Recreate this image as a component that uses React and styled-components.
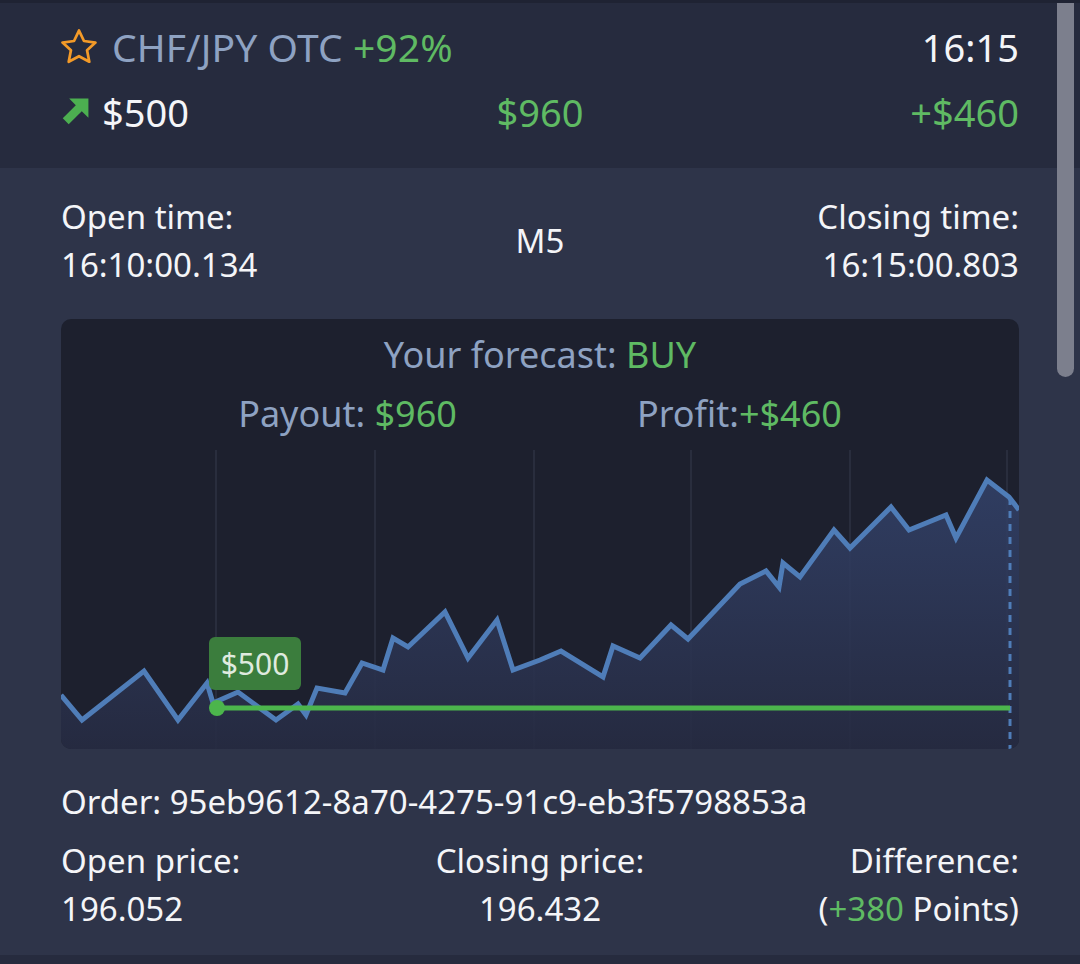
import React from "react";
import styled, { createGlobalStyle } from "styled-components";

const GlobalStyle = createGlobalStyle`
  html, body {
    margin: 0;
    padding: 0;
    background: #2e3449;
  }
  * { box-sizing: border-box; }
`;

const green = "#5fba63";
const slate = "#8ea2c2";

const Screen = styled.div`
  position: relative;
  width: 1080px;
  height: 964px;
  overflow: hidden;
  background: #2e3449;
  color: #f4f5f8;
  font-family: "Noto Sans", "Open Sans", sans-serif;
  border-top: 3px solid #1f2333;
`;

const Scrollbar = styled.div`
  position: absolute;
  top: 0;
  left: 1057px;
  width: 17px;
  height: 374px;
  border-radius: 0 0 9px 9px;
  background: #7c7f8d;
`;

const Header = styled.header`
  background: #262b3e;
  padding: 20px 61px 32px;
  display: flex;
  flex-direction: column;
  gap: 17px;
  font-size: 38px;
  line-height: 48px;
`;

const Row = styled.div`
  display: grid;
  grid-template-columns: 1fr auto 1fr;
  align-items: center;
  & > :last-child { justify-self: end; text-align: right; }
`;

const Cell = styled.div`
  display: flex;
  align-items: center;
  gap: ${(p) => p.gap || 0}px;
  white-space: pre;
  color: ${(p) => p.color || "inherit"};
`;

const Title = styled.span`
  font-size: 39px;
  letter-spacing: 0.1px;
`;

const Col = styled.div`
  display: flex;
  flex-direction: column;
  text-align: ${(p) => p.align || "left"};
  white-space: pre;
`;

const Span = styled.span`
  color: ${(p) => p.color};
`;

const Body = styled.main`
  padding: 25px 61px 0;
  font-size: 33px;
  line-height: 48px;
`;

const Card = styled.section`
  position: relative;
  margin-top: 30px;
  height: 430px;
  border-radius: 10px;
  background: #1d202e;
  overflow: hidden;
  padding-top: 12px;
  color: ${slate};
  font-size: 36px;
`;

const Forecast = styled.div`
  text-align: center;
`;

const Results = styled.div`
  display: flex;
  justify-content: center;
  gap: 180px;
  margin-top: 11px;
  white-space: pre;
`;

const ChartBox = styled.div`
  position: absolute;
  left: 0;
  bottom: 0;
  width: 958px;
  height: 299px;
`;

const Badge = styled.div`
  position: absolute;
  left: 148px;
  top: 187px;
  width: 92px;
  height: 53px;
  border-radius: 6px;
  background: #3b7d3d;
  color: #dfeadf;
  font-size: 30px;
  line-height: 53px;
  text-align: center;
`;

const OrderLine = styled.div`
  margin-top: 29px;
  white-space: pre;
`;

const Prices = styled(Row)`
  margin-top: 11px;
  align-items: start;
`;

const Footer = styled.div`
  position: absolute;
  left: 0;
  right: 0;
  bottom: 0;
  height: 9px;
  background: #262b3e;
`;

const Star = () => (
  <svg width="36" height="36" viewBox="1.5 1.5 21 21" fill="none" stroke="#f39a28" strokeWidth="1.6" strokeLinejoin="round">
    <polygon points="12 2.4 14.9 8.5 21.6 9.4 16.7 13.9 18 20.6 12 17.4 6 20.6 7.3 13.9 2.4 9.4 9.1 8.5" />
  </svg>
);

const UpArrow = () => (
  <svg width="28" height="28" viewBox="0 0 24 24">
    <path d="M7 0.5 H23.5 V17 L17.8 11.3 L6.6 22.5 L1.5 17.4 L12.7 6.2 Z" fill="#4caf50" />
  </svg>
);

const points = [
  [0, 245], [21, 270], [83, 221], [117, 270], [146, 233], [152, 253], [177, 242],
  [215, 270], [237, 254], [245, 265], [256, 238], [284, 243], [301, 213], [322, 220],
  [332, 188], [347, 197], [384, 162], [407, 208], [436, 170], [452, 220], [479, 210],
  [500, 201], [542, 227], [552, 196], [579, 208], [610, 175], [627, 189], [679, 134],
  [705, 121], [718, 137], [722, 113], [739, 127], [773, 80], [789, 98], [830, 57],
  [848, 80], [885, 65], [895, 88], [926, 30], [948, 47], [958, 60],
];

const gridX = [155, 314, 473, 630, 789, 946];

function Chart() {
  const line = points.map(([x, y]) => `${x},${y}`).join(" ");
  const area = `M0,299 L${line.replace(/ /g, " L")} L958,299 Z`;
  return (
    <svg width="958" height="299" viewBox="0 0 958 299">
      <defs>
        <linearGradient id="fill" x1="0" y1="0" x2="0" y2="1">
          <stop offset="0" stopColor="#33426a" stopOpacity="0.85" />
          <stop offset="1" stopColor="#262b42" stopOpacity="0.9" />
        </linearGradient>
      </defs>
      {gridX.map((x) => (
        <line key={x} x1={x} y1="0" x2={x} y2="299" stroke="#292d3d" strokeWidth="2" />
      ))}
      <path d={area} fill="url(#fill)" />
      <polyline points={line} fill="none" stroke="#4f7db8" strokeWidth="5" strokeLinejoin="miter" />
      <line x1="949" y1="48" x2="949" y2="299" stroke="#4f7db8" strokeWidth="3" strokeDasharray="7 6" />
      <line x1="156" y1="258" x2="949" y2="258" stroke="#4cb54c" strokeWidth="5" />
      <circle cx="156" cy="258" r="8" fill="#4cb54c" />
    </svg>
  );
}

export default function App() {
  return (
    <>
      <GlobalStyle />
      <Screen>
        <Header>
          <Row>
            <Cell gap={15}>
              <Star />
              <Title>
                <Span color={slate}>CHF/JPY OTC </Span>
                <Span color={green}>+92%</Span>
              </Title>
            </Cell>
            <span />
            <Cell>16:15</Cell>
          </Row>
          <Row>
            <Cell gap={13}>
              <UpArrow />
              <span>$500</span>
            </Cell>
            <Cell color={green}>$960</Cell>
            <Cell color={green}>+$460</Cell>
          </Row>
        </Header>

        <Body>
          <Row>
            <Col>
              <span>Open time:</span>
              <span>16:10:00.134</span>
            </Col>
            <Col align="center">M5</Col>
            <Col align="right">
              <span>Closing time:</span>
              <span>16:15:00.803</span>
            </Col>
          </Row>

          <Card>
            <Forecast>
              Your forecast: <Span color={green}>BUY</Span>
            </Forecast>
            <Results>
              <span>
                Payout: <Span color={green}>$960</Span>
              </span>
              <span>
                Profit:<Span color={green}>+$460</Span>
              </span>
            </Results>
            <ChartBox>
              <Chart />
              <Badge>$500</Badge>
            </ChartBox>
          </Card>

          <OrderLine>Order: 95eb9612-8a70-4275-91c9-eb3f5798853a</OrderLine>

          <Prices>
            <Col>
              <span>Open price:</span>
              <span>196.052</span>
            </Col>
            <Col align="center">
              <span>Closing price:</span>
              <span>196.432</span>
            </Col>
            <Col align="right">
              <span>Difference:</span>
              <span>
                (<Span color={green}>+380</Span> Points)
              </span>
            </Col>
          </Prices>
        </Body>
        <Footer />
        <Scrollbar />
      </Screen>
    </>
  );
}
